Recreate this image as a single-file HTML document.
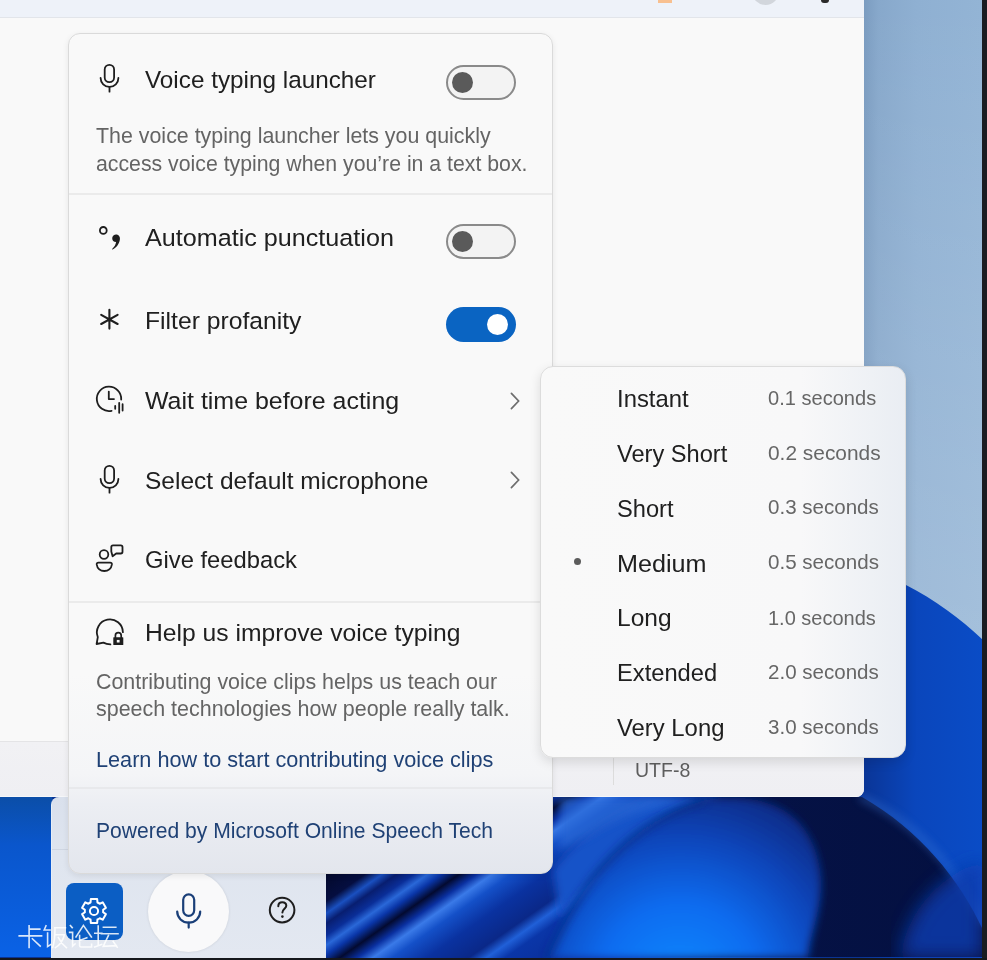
<!DOCTYPE html>
<html><head><meta charset="utf-8">
<style>
*{margin:0;padding:0;box-sizing:border-box}
html,body{width:987px;height:960px;overflow:hidden}
body{position:relative;background:#0b3aa8;font-family:"Liberation Sans",sans-serif;color:#1b1b1b}
.abs{position:absolute}
.t{position:absolute;white-space:pre;line-height:1;transform-origin:0 0}
</style></head><body>
<!-- wallpaper -->
<svg class="abs" style="left:0;top:0" width="987" height="960" viewBox="0 0 987 960">
  <defs>
    <linearGradient id="sky" gradientUnits="userSpaceOnUse" x1="864" y1="0" x2="982" y2="0">
      <stop offset="0" stop-color="#7b9cc0"/>
      <stop offset="0.12" stop-color="#87a8cb"/>
      <stop offset="0.45" stop-color="#8fb0d2"/>
      <stop offset="1" stop-color="#93b4d5"/>
    </linearGradient>
    <linearGradient id="skyV" x1="0" y1="0" x2="0" y2="1">
      <stop offset="0" stop-color="#ffffff" stop-opacity="0"/>
      <stop offset="1" stop-color="#ffffff" stop-opacity="0.16"/>
    </linearGradient>
    <linearGradient id="petalR" x1="0" y1="0" x2="0" y2="1">
      <stop offset="0" stop-color="#0a4ec4"/>
      <stop offset="1" stop-color="#0838a0"/>
    </linearGradient>
    <radialGradient id="bloom" cx="0.35" cy="1" r="0.9">
      <stop offset="0" stop-color="#0a86ff"/>
      <stop offset="0.45" stop-color="#0a5ee0"/>
      <stop offset="1" stop-color="#082e88"/>
    </radialGradient>
    <linearGradient id="leftw" x1="0" y1="0" x2="0" y2="1">
      <stop offset="0" stop-color="#0b4ea8"/>
      <stop offset="0.3" stop-color="#0a56cc"/>
      <stop offset="1" stop-color="#0a62e6"/>
    </linearGradient>
    <filter id="blur4"><feGaussianBlur stdDeviation="4"/></filter>
    <filter id="blur8"><feGaussianBlur stdDeviation="9"/></filter>
  </defs>
  <rect x="0" y="0" width="987" height="960" fill="url(#sky)"/>
  <rect x="864" y="0" width="118" height="640" fill="url(#skyV)"/>
  <path d="M864 560 C880 570 895 578 906 585 C935 600 960 618 983 640 L983 960 L0 960 L0 780 L864 780 Z" fill="url(#petalR2)"/>
  <rect x="0" y="797" width="52" height="160" fill="url(#leftw)"/>
  <!-- bottom wallpaper region -->
  <defs>
    <linearGradient id="navy" x1="0" y1="0" x2="1" y2="0">
      <stop offset="0" stop-color="#061650"/>
      <stop offset="1" stop-color="#041040"/>
    </linearGradient>
    <radialGradient id="petal" cx="680" cy="985" r="200" gradientUnits="userSpaceOnUse">
      <stop offset="0" stop-color="#0a8aff"/>
      <stop offset="0.4" stop-color="#0a6cf0"/>
      <stop offset="0.75" stop-color="#0a44b8"/>
      <stop offset="1" stop-color="#0a2c88"/>
    </radialGradient>
    <linearGradient id="rightblue" x1="840" y1="0" x2="983" y2="0" gradientUnits="userSpaceOnUse">
      <stop offset="0" stop-color="#0a2c90" stop-opacity="0"/>
      <stop offset="0.35" stop-color="#0a3aa8" stop-opacity="0.6"/>
      <stop offset="0.6" stop-color="#0a46bc" stop-opacity="1"/>
      <stop offset="1" stop-color="#0a4cc6" stop-opacity="1"/>
    </linearGradient>
    <linearGradient id="petalR2" x1="860" y1="0" x2="983" y2="0" gradientUnits="userSpaceOnUse">
      <stop offset="0" stop-color="#0a3494"/>
      <stop offset="0.45" stop-color="#0a46bc"/>
      <stop offset="1" stop-color="#0a4cc6"/>
    </linearGradient>
    <linearGradient id="streak" x1="0" y1="1" x2="1" y2="0">
      <stop offset="0" stop-color="#0a3cb8"/>
      <stop offset="0.5" stop-color="#1a6ae8"/>
      <stop offset="1" stop-color="#2a78e8"/>
    </linearGradient>
  </defs>
  <rect x="326" y="797" width="657" height="160" fill="url(#navy)"/>
  <linearGradient id="streaks" gradientUnits="userSpaceOnUse" x1="515.7" y1="737.1" x2="636" y2="909.1"><stop offset="0.000" stop-color="#030828"/><stop offset="0.124" stop-color="#050e40"/><stop offset="0.171" stop-color="#1a50c0"/><stop offset="0.210" stop-color="#081e70"/><stop offset="0.257" stop-color="#0a2e98"/><stop offset="0.295" stop-color="#2a68d8"/><stop offset="0.333" stop-color="#0a36a8"/><stop offset="0.381" stop-color="#030a30"/><stop offset="0.429" stop-color="#0a30a0"/><stop offset="0.471" stop-color="#3a7ae8"/><stop offset="0.524" stop-color="#1450c8"/><stop offset="0.619" stop-color="#0a32a0"/><stop offset="0.733" stop-color="#0a2888"/><stop offset="0.781" stop-color="#2060d8"/><stop offset="0.833" stop-color="#0a36a8"/><stop offset="1.000" stop-color="#0a2e98"/></linearGradient>
  <linearGradient id="fadeR" gradientUnits="userSpaceOnUse" x1="640" y1="0" x2="730" y2="0"><stop offset="0" stop-color="#fff"/><stop offset="1" stop-color="#000"/></linearGradient>
  <mask id="streakMask"><rect x="326" y="797" width="404" height="161" fill="url(#fadeR)"/></mask>
  <rect x="326" y="797" width="404" height="161" fill="url(#streaks)" mask="url(#streakMask)"/>
  <path d="M553 870 C575 840 610 812 650 797 L720 797 C650 820 600 870 560 920 Z" fill="#1652c8" filter="url(#blur4)"/>
  <path d="M560 797 L700 797 C660 803 620 815 590 835 L560 850 Z" fill="#2a6ad8" opacity="0.7" filter="url(#blur4)"/>
  <path d="M548 958 C575 895 620 825 705 800 C770 790 808 815 818 860 C828 900 810 930 808 958 Z" fill="url(#petal)" filter="url(#blur4)"/>
  <path d="M548 958 C575 895 620 825 705 800" stroke="#082070" stroke-width="5" fill="none" opacity="0.6" filter="url(#blur4)"/>
  <path d="M850 790 L983 790 L983 930 C960 880 920 830 862 797 Z" fill="url(#petalR2)"/>
  <path d="M860 797 C915 822 955 865 983 925" stroke="#3a78d8" stroke-width="5" fill="none" opacity="0.55" filter="url(#blur4)"/>
  <path d="M900 958 C905 920 930 880 983 860 L983 958 Z" fill="#0a3aac" opacity="0.85" filter="url(#blur8)"/>
  <rect x="982" y="0" width="5" height="960" fill="#1a1c22"/>
  <rect x="0" y="958" width="987" height="2" fill="#15171c"/>
</svg>

<!-- window -->
<div class="abs" style="left:0;top:0;width:864px;height:797px;background:#f9f9f9;border-bottom-right-radius:8px;overflow:hidden">
  <div class="abs" style="left:0;top:0;width:864px;height:18px;background:#eef2f9;border-bottom:1px solid #e2e5ea"></div>
  <div class="abs" style="left:658px;top:0;width:14px;height:3px;background:#f8c090"></div>
  <div class="abs" style="left:752px;top:-22px;width:27px;height:27px;border-radius:50%;background:#d2d6dc"></div>
  <div class="abs" style="left:821px;top:-3px;width:8px;height:6px;border-radius:3px;background:#2a2a2a"></div>
  <div class="abs" style="left:0;top:741px;width:864px;height:56px;background:linear-gradient(#f1f1f4,#efeff3);border-top:1px solid #e4e4e6;border-bottom:1px solid #f6f7f9"></div>
  <div class="abs" style="left:613px;top:757px;width:1px;height:28px;background:#dcdcdc"></div>
  <div class="t" style="left:635.20px;top:759.12px;font-size:21px;color:#5e5e5e;transform:scaleX(0.9305);">UTF-8</div>

</div>

<!-- toolbar -->
<div class="abs" style="left:51px;top:797px;width:275px;height:161px;background:linear-gradient(#d9e0ec,#dfe5ef 60px,#e3e8f1);border-top-left-radius:8px;border-left:1px solid #e6eef8"></div>
<div class="abs" style="left:52px;top:849px;width:17px;height:1px;background:#cfd6e2"></div>
<div class="abs" style="left:66px;top:883px;width:57px;height:57px;background:#0b5ec4;border-radius:8px"></div>
<svg class="abs" style="left:74px;top:891px" width="40" height="40" viewBox="-20 -20 40 40">
  <path d="M-3.45 -8.53 L-3.18 -11.88 L3.18 -11.88 L3.45 -8.53 A9.2 9.2 0 0 1 5.66 -7.25 L8.70 -8.70 L11.88 -3.18 L9.11 -1.28 A9.2 9.2 0 0 1 9.11 1.28 L11.88 3.18 L8.70 8.70 L5.66 7.25 A9.2 9.2 0 0 1 3.45 8.53 L3.18 11.88 L-3.18 11.88 L-3.45 8.53 A9.2 9.2 0 0 1 -5.66 7.25 L-8.70 8.70 L-11.88 3.18 L-9.11 1.28 A9.2 9.2 0 0 1 -9.11 -1.28 L-11.88 -3.18 L-8.70 -8.70 L-5.66 -7.25 A9.2 9.2 0 0 1 -3.45 -8.53 Z" fill="none" stroke="#fff" stroke-width="2" stroke-linejoin="round"/>
  <circle cx="0" cy="0" r="4.1" fill="none" stroke="#fff" stroke-width="2"/>
</svg>
<div class="abs" style="left:148px;top:871px;width:81px;height:81px;border-radius:50%;background:#f9f9fa;box-shadow:0 0 3px rgba(0,0,0,.10)"></div>
<svg class="abs" style="left:0;top:0" width="987" height="960" viewBox="0 0 987 960" fill="none" stroke-linecap="round">
  <rect x="183.2" y="894.3" width="11" height="21.5" rx="5.5" stroke="#1a3f78" stroke-width="2.2"/>
  <path d="M177.2 911.5 A11.5 11.2 0 0 0 200.2 911.5" stroke="#1a3f78" stroke-width="2.2"/>
  <path d="M188.7 922.7 L188.7 927.6" stroke="#1a3f78" stroke-width="2.2"/>
  <circle cx="282.1" cy="910.1" r="12.3" stroke="#1e1e1e" stroke-width="2"/>
  <path d="M278.3 906.2 C278.3 903.6 280 902.2 282.2 902.2 C284.6 902.2 286.3 903.7 286.3 905.8 C286.3 908.6 282.4 909.2 282.4 912.6" stroke="#1e1e1e" stroke-width="2"/>
  <circle cx="282.4" cy="916.6" r="1.3" fill="#1e1e1e" stroke="none"/>
</svg>
<svg class="abs" style="left:0;top:0" width="987" height="960" viewBox="0 0 987 960" fill="none" stroke="#ffffff" stroke-opacity="0.85" stroke-width="1.6" stroke-linecap="square">
  <path d="M29.1 925.8 L29.1 947.4 M29.1 929.1 L39.8 929.1 M19.2 935.9 L41.6 935.9 M32.4 938.8 L40.2 946"/>
  <path d="M46 925.8 L44.2 930 L50 930 M47.6 933 L47.6 946.6 L50.6 944.6 M54.8 927.8 L65.4 927.8 M55 928 C55 936 54.6 942 52.6 947.6 M55.8 934.8 L64.4 934.8 C63 941 60 945 55.4 947.6 M58.4 937.6 C60.6 942 63 945 66.4 947.6"/>
  <path d="M70.4 925.6 L72.2 927.6 M69.6 932.4 L72.6 932.4 L72.6 946.2 L75 944 M76 937 L83.4 925.4 L91.4 937 M79.6 935.6 L79.6 945.6 Q79.6 947 81 947 L91.6 947 L91.6 944.4 M79.6 940.4 L86.8 937.8"/>
  <path d="M98.2 926 L98.2 945.6 M94.8 933.2 L101.8 933.2 M94.6 947 L101.6 944.4 M103.4 927.2 L115.8 927.2 M101.4 933.8 L118 933.8 M108.4 935.6 L103.2 946.4 L116.4 945.6 M113.2 941.4 L117.2 947.2"/>
</svg>

<!-- main panel -->
<div class="abs" style="left:68px;top:33px;width:485px;height:841px;background:linear-gradient(180deg,#f9f9f9 0px,#f9f9f9 640px,#f4f5f7 740px,#eceef3 770px,#e3e6ed 840px);border:1px solid #dadada;border-radius:12px;box-shadow:0 2px 6px rgba(0,0,0,.08)"></div>
<div class="abs" style="left:69px;top:193px;width:483px;height:2px;background:#ebebeb"></div>
<div class="abs" style="left:69px;top:601px;width:483px;height:2px;background:#ebebeb"></div>
<div class="abs" style="left:69px;top:787px;width:483px;height:2px;background:#e8e9ec"></div>

<!-- toggles -->
<div class="abs" style="left:446px;top:65px;width:70px;height:35px;border:2px solid #8a8a8a;border-radius:18px;background:#f3f3f3"></div>
<div class="abs" style="left:452px;top:72px;width:21px;height:21px;border-radius:50%;background:#5a5a5a"></div>
<div class="abs" style="left:446px;top:224px;width:70px;height:35px;border:2px solid #8a8a8a;border-radius:18px;background:#f3f3f3"></div>
<div class="abs" style="left:452px;top:231px;width:21px;height:21px;border-radius:50%;background:#5a5a5a"></div>
<div class="abs" style="left:446px;top:307px;width:70px;height:35px;border-radius:18px;background:#0a64c2"></div>
<div class="abs" style="left:487px;top:314px;width:21px;height:21px;border-radius:50%;background:#fff"></div>

<!-- chevrons -->
<svg class="abs" style="left:0;top:0" width="987" height="960" viewBox="0 0 987 960"><path d="M511.4 393.4 L518.6 401 L511.4 408.6 M511.4 472.4 L518.6 480 L511.4 487.6" fill="none" stroke="#6e6e6e" stroke-width="1.7" stroke-linecap="round" stroke-linejoin="miter"/></svg>

<!-- icons -->
<svg class="abs" style="left:0;top:0" width="987" height="960" viewBox="0 0 987 960" fill="none" stroke="#1e1e1e" stroke-width="1.8" stroke-linecap="round" stroke-linejoin="round">
  <g id="mic1">
    <rect x="104.7" y="64.8" width="9.4" height="17.4" rx="4.7"/>
    <path d="M100.6 78 A8.9 8.9 0 0 0 118.4 78"/>
    <path d="M109.5 86.9 L109.5 91.7"/>
  </g>
  <g transform="translate(0 401)">
    <rect x="104.7" y="64.8" width="9.4" height="17.4" rx="4.7"/>
    <path d="M100.6 78 A8.9 8.9 0 0 0 118.4 78"/>
    <path d="M109.5 86.9 L109.5 91.7"/>
  </g>
  <!-- punctuation -->
  <circle cx="103.3" cy="230.4" r="3.4"/>
  <path d="M112.2 238 A3.9 3.9 0 1 1 119.9 239.2 C119.4 243.8 116.4 247.6 112.6 249.6 C112.2 249.8 111.8 249.3 112.1 249 C114.4 246.7 115.8 244.4 116.1 241.9 A3.9 3.9 0 0 1 112.2 238 Z" fill="#1e1e1e" stroke="none"/>
  <!-- asterisk -->
  <path d="M109.4 309.8 L109.4 328.6 M101.2 314.8 L117.6 324 M101.2 324 L117.6 314.8" stroke-width="2.1"/>
  <!-- clock -->
  <path d="M121.2 399.5 A12.2 12.2 0 1 0 111.6 410.8"/>
  <path d="M108.8 391.6 L108.8 399.1 L114 399.1"/>
  <path d="M115.2 406 L115.2 408.8 M119.2 402.8 L119.2 412.8 M122.6 404.2 L122.6 410.6"/>
  <!-- feedback -->
  <circle cx="104" cy="554.5" r="4.3"/>
  <path d="M98.4 562.6 L110.2 562.6 Q112 562.6 111.9 564.4 C111.4 568.4 108.2 571 104.3 571 C100.4 571 97.2 568.4 96.7 564.4 Q96.6 562.6 98.4 562.6 Z"/>
  <path d="M113 545.4 L120.8 545.4 Q122.5 545.4 122.5 547.1 L122.5 551.8 Q122.5 553.5 120.8 553.5 L116.2 553.5 L112.6 556.2 L111.3 551.5 L111.3 547.1 Q111.3 545.4 113 545.4 Z"/>
  <!-- help lock -->
  <path d="M122.9 632.2 A13 13 0 1 0 97.8 637.2 L96.6 644 L103.4 642.6 Q106.5 644.2 110.4 644.4"/>
  <rect x="113.3" y="637.2" width="10" height="7.8" rx="0.6" fill="#1e1e1e" stroke="none"/>
  <path d="M115.4 637.5 L115.4 635.6 A2.9 2.9 0 0 1 121.2 635.6 L121.2 637.5" stroke-width="1.7"/>
  <rect x="116.8" y="639.9" width="2.8" height="2.6" fill="#f9f9f9" stroke="none"/>
</svg>
<div class="t" style="left:144.60px;top:67.66px;font-size:24.5px;color:#202020;transform:scaleX(0.9914);">Voice typing launcher</div>
<div class="t" style="left:95.60px;top:125.97px;font-size:21.3px;color:#646464;transform:scaleX(1.0041);">The voice typing launcher lets you quickly</div>
<div class="t" style="left:95.60px;top:153.97px;font-size:21.3px;color:#646464;transform:scaleX(0.9986);">access voice typing when you’re in a text box.</div>
<div class="t" style="left:144.60px;top:226.46px;font-size:24.5px;color:#202020;transform:scaleX(1.0266);">Automatic punctuation</div>
<div class="t" style="left:144.60px;top:308.86px;font-size:24.5px;color:#202020;transform:scaleX(1.0077);">Filter profanity</div>
<div class="t" style="left:144.60px;top:388.96px;font-size:24.5px;color:#202020;transform:scaleX(1.0181);">Wait time before acting</div>
<div class="t" style="left:144.60px;top:468.56px;font-size:24.5px;color:#202020;transform:scaleX(1.0004);">Select default microphone</div>
<div class="t" style="left:144.60px;top:547.86px;font-size:24.5px;color:#202020;transform:scaleX(0.9699);">Give feedback</div>
<div class="t" style="left:144.60px;top:621.26px;font-size:24.5px;color:#202020;transform:scaleX(1.0071);">Help us improve voice typing</div>
<div class="t" style="left:95.60px;top:671.87px;font-size:21.3px;color:#646464;transform:scaleX(1.0053);">Contributing voice clips helps us teach our</div>
<div class="t" style="left:95.60px;top:699.37px;font-size:21.3px;color:#646464;transform:scaleX(1.0071);">speech technologies how people really talk.</div>
<div class="t" style="left:95.60px;top:749.77px;font-size:21.3px;color:#1f4175;transform:scaleX(1.0172);">Learn how to start contributing voice clips</div>
<div class="t" style="left:95.60px;top:820.77px;font-size:21.3px;color:#1f4175;transform:scaleX(0.9903);">Powered by Microsoft Online Speech Tech</div>
<!-- submenu -->
<div class="abs" style="left:540px;top:366px;width:366px;height:392px;background:linear-gradient(90deg,#f9f9f9 0px,#f8f8f9 260px,#eef1f5 330px,#e9edf3 366px);border:1px solid #dcdcdc;border-radius:13px;box-shadow:0 4px 12px rgba(0,0,0,.12)"></div>
<div class="abs" style="left:574px;top:558px;width:7px;height:7px;border-radius:50%;background:#5c5c5c"></div>
<div class="t" style="left:616.60px;top:387.21px;font-size:24.2px;color:#202020;transform:scaleX(0.9863);">Instant</div>
<div class="t" style="left:616.60px;top:442.31px;font-size:24.2px;color:#202020;transform:scaleX(0.9761);">Very Short</div>
<div class="t" style="left:616.60px;top:496.61px;font-size:24.2px;color:#202020;transform:scaleX(0.9776);">Short</div>
<div class="t" style="left:616.60px;top:551.61px;font-size:24.2px;color:#202020;transform:scaleX(1.0400);">Medium</div>
<div class="t" style="left:616.60px;top:606.31px;font-size:24.2px;color:#202020;transform:scaleX(1.0135);">Long</div>
<div class="t" style="left:616.60px;top:661.01px;font-size:24.2px;color:#202020;transform:scaleX(0.9792);">Extended</div>
<div class="t" style="left:616.60px;top:715.71px;font-size:24.2px;color:#202020;transform:scaleX(0.9861);">Very Long</div>
<div class="t" style="left:768.20px;top:388.30px;font-size:20.2px;color:#666666;transform:scaleX(0.9935);">0.1 seconds</div>
<div class="t" style="left:768.20px;top:443.20px;font-size:20.2px;color:#666666;transform:scaleX(1.0343);">0.2 seconds</div>
<div class="t" style="left:768.20px;top:497.20px;font-size:20.2px;color:#666666;transform:scaleX(1.0176);">0.3 seconds</div>
<div class="t" style="left:768.20px;top:552.10px;font-size:20.2px;color:#666666;transform:scaleX(1.0194);">0.5 seconds</div>
<div class="t" style="left:768.20px;top:607.50px;font-size:20.2px;color:#666666;transform:scaleX(0.9898);">1.0 seconds</div>
<div class="t" style="left:768.20px;top:662.20px;font-size:20.2px;color:#666666;transform:scaleX(1.0176);">2.0 seconds</div>
<div class="t" style="left:768.20px;top:716.90px;font-size:20.2px;color:#666666;transform:scaleX(1.0176);">3.0 seconds</div>
</body></html>
